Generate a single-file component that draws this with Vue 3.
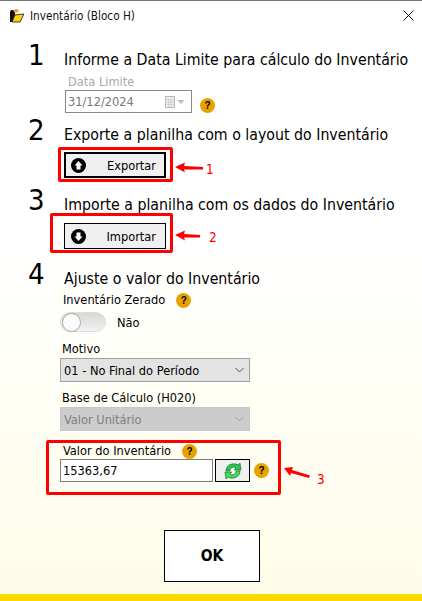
<template>
  <div class="window">
    <header class="titlebar">
      <svg class="folder" width="15" height="14" viewBox="0 0 15 14">
        <path d="M1 3 L1 13 L3 13 L6 6 L6 3 L4 1 L2 1 Z" fill="#111" />
        <path d="M4 1 L7 0 L10 1 L9 3 L6 4 Z" fill="#e8a33a" />
        <path d="M3 13 L6 6 L15 5 L11 13 Z" fill="#ffd800" stroke="#111" stroke-width="0.8" />
      </svg>
      <span class="title">Inventário (Bloco H)</span>
      <svg class="close" width="11" height="11" viewBox="0 0 11 11">
        <path d="M0.5 0.5 L10.5 10.5 M10.5 0.5 L0.5 10.5" stroke="#111" stroke-width="1" fill="none" />
      </svg>
    </header>

    <main class="content">
      <section class="step">
        <div class="step-head"><span class="num">1</span><h2>Informe a Data Limite para cálculo do Inventário</h2></div>
        <div class="label muted">Data Limite</div>
        <div class="date-row">
          <div class="date-box">
            <span>31/12/2024</span>
            <svg width="20" height="12" viewBox="0 0 20 12">
              <rect x="0.5" y="0.5" width="9" height="11" fill="#eee" stroke="#bbb" />
              <path d="M1 3.5H9M1 6H9M1 8.5H9M3.5 3V11M6 3V11" stroke="#c8c8c8" stroke-width="0.7" />
              <path d="M12.5 4 L19.5 4 L16 8 Z" fill="#bdbdbd" />
            </svg>
          </div>
          <span class="help date-help">?</span>
        </div>
      </section>

      <section class="step step-2">
        <div class="step-head"><span class="num">2</span><h2>Exporte a planilha com o layout do Inventário</h2></div>
        <div class="action-row row-export">
          <div class="mark mark-export">
            <button class="action action-focus">
              <svg class="round" width="15" height="15" viewBox="0 0 15 15">
                <circle cx="7.5" cy="7.5" r="7.5" fill="#000" />
                <path d="M7.5 3 L11.5 7.5 L9.5 7.5 L9.5 11.5 L5.5 11.5 L5.5 7.5 L3.5 7.5 Z" fill="#fff" />
              </svg>
              <span>Exportar</span>
            </button>
          </div>
          <svg class="arrow" width="30" height="12" viewBox="0 0 30 12">
            <path d="M1 5 L11 0.5 L10 4 L29 5 L29 7.5 L10 7.5 L11 10.5 Z" fill="#f00" />
          </svg>
          <span class="note note-1">1</span>
        </div>
      </section>

      <section class="step step-3">
        <div class="step-head"><span class="num">3</span><h2>Importe a planilha com os dados do Inventário</h2></div>
        <div class="action-row row-import">
          <div class="mark mark-import">
            <button class="action">
              <svg class="round" width="15" height="15" viewBox="0 0 15 15">
                <circle cx="7.5" cy="7.5" r="7.5" fill="#000" />
                <path d="M7.5 12 L11.5 7.5 L9.5 7.5 L9.5 3.5 L5.5 3.5 L5.5 7.5 L3.5 7.5 Z" fill="#fff" />
              </svg>
              <span>Importar</span>
            </button>
          </div>
          <svg class="arrow" width="27" height="12" viewBox="0 0 27 12">
            <path d="M1 5 L11 0.5 L10 4 L26 5 L26 7.5 L10 7.5 L11 10.5 Z" fill="#f00" />
          </svg>
          <span class="note note-2">2</span>
        </div>
      </section>

      <section class="step step-4">
        <div class="step-head"><span class="num">4</span><h2>Ajuste o valor do Inventário</h2></div>
        <div class="field">
          <div class="label zero-label">Inventário Zerado <span class="help">?</span></div>
          <div class="toggle-row">
            <div class="toggle"><span class="knob"></span></div>
            <span class="toggle-text">Não</span>
          </div>
          <div class="label field-label">Motivo</div>
          <div class="select">
            <span>01 - No Final do Período</span>
            <svg width="9" height="6" viewBox="0 0 9 6"><path d="M0.5 1 L4.5 5 L8.5 1" fill="none" stroke="#555" stroke-width="1" /></svg>
          </div>
          <div class="label field-label">Base de Cálculo (H020)</div>
          <div class="select select-off">
            <span>Valor Unitário</span>
            <svg width="9" height="6" viewBox="0 0 9 6"><path d="M0.5 1 L4.5 5 L8.5 1" fill="none" stroke="#a0a0a0" stroke-width="1" /></svg>
          </div>
        </div>

        <div class="value-row">
          <div class="mark mark-value">
            <div class="label value-label">Valor do Inventário <span class="help">?</span></div>
            <div class="value-inputs">
              <input class="value-input" value="15363,67" />
              <button class="refresh">
                <svg width="18" height="18" viewBox="0 0 18 18">
                  <circle cx="9" cy="9" r="5" fill="#fff" />
                  <path d="M2 9 C2 3 9 0 14 3 L16 1 L17 8 L10 8 L12 6 C9 4 6 6 6 9 Z" fill="#2ec44c" stroke="#0b7a22" stroke-width="0.7" />
                  <path d="M16 9 C16 15 9 18 4 15 L2 17 L1 10 L8 10 L6 12 C9 14 12 12 12 9 Z" fill="#46d863" stroke="#0b7a22" stroke-width="0.7" />
                </svg>
              </button>
              <span class="help">?</span>
            </div>
          </div>
          <svg class="arrow-3" width="26" height="12" viewBox="0 0 26 12">
            <path d="M0 1 L9 0 L8 3 L26 8.5 L25 11 L7 6 L6 9 Z" fill="#f00" />
          </svg>
          <span class="note note-3">3</span>
        </div>
      </section>

      <div class="footer"><button class="ok">OK</button></div>
    </main>
    <div class="bar"></div>
  </div>
</template>

<script setup>
</script>

<style>
html, body {
  margin: 0;
  background: #fff;
}
</style>

<style scoped>
.window {
  width: 422px;
  height: 601px;
  box-sizing: border-box;
  border-top: 1px solid #777;
  display: flex;
  flex-direction: column;
  overflow: hidden;
  font-family: "DejaVu Sans Condensed", "DejaVu Sans", "Noto Sans", sans-serif;
  font-stretch: condensed;
  font-size: 12.7px;
  color: #000;
  background: linear-gradient(#fff 0%, #fff 40%, #fffde8 100%);
}
.titlebar {
  height: 29px;
  flex: none;
  display: flex;
  align-items: center;
  padding: 0 8px 0 9px;
}
.folder { margin-right: 6px; }
.title { font-size: 11.7px; color: #111; }
.close { margin-left: auto; }
.content {
  flex: 1;
  padding-left: 28px;
  padding-top: 12px;
}
.step-head {
  display: flex;
  align-items: baseline;
  height: 30px;
}
.num {
  width: 36px;
  font-size: 29px;
  line-height: 26px;
}
h2 {
  margin: 0;
  font-size: 15.75px;
  font-weight: 400;
  white-space: nowrap;
}
.label {
  font-size: 12.7px;
  line-height: 16px;
}
.muted {
  color: #aaa;
  margin: 2px 0 0 40px;
}
.date-row {
  display: flex;
  align-items: flex-end;
  margin-left: 37px;
}
.date-box {
  width: 127px;
  height: 23px;
  box-sizing: border-box;
  border: 1px solid #888;
  display: flex;
  align-items: center;
  justify-content: space-between;
  padding: 0 6px 0 2px;
  color: #777;
}
.date-help { margin-left: 8px; }
.help {
  display: inline-block;
  width: 15px;
  height: 15px;
  line-height: 15px;
  border-radius: 50%;
  background: #e8a200;
  color: #000;
  text-align: center;
  font-weight: 700;
  font-size: 10px;
  font-family: "Liberation Sans", sans-serif;
  flex: none;
}
.step-2 { margin-top: 4px; }
.step-3 { margin-top: 5px; }
.step-4 { margin-top: 8px; }
.action-row {
  display: flex;
  align-items: center;
}
.row-export { margin-top: 0; }
.row-import { margin-top: -4px; }
.mark {
  border: 3px solid #f00;
  box-sizing: border-box;
  border-radius: 2px;
}
.mark-export {
  margin-left: 30px;
  width: 115px;
  height: 35px;
  padding: 2px 3px;
}
.mark-import {
  margin-left: 22px;
  width: 123px;
  height: 40px;
  padding: 7px 4px 1px 11px;
}
.action {
  width: 102px;
  height: 26px;
  box-sizing: border-box;
  border: 1px solid #000;
  background: #f0f0f0;
  display: flex;
  align-items: center;
  justify-content: space-between;
  padding: 0 9px 0 6px;
  font: inherit;
  color: #000;
}
.action-focus { border-width: 2px; padding: 0 8px 0 5px; }
.arrow { margin-left: 1px; margin-top: 6px; }
.note {
  color: #f00;
  font-size: 13.5px;
}
.note-1 { margin-left: 2px; margin-top: 8px; }
.note-2 { margin-left: 8px; margin-top: 8px; }
.field { margin-left: 32px; }
.zero-label {
  margin-left: 3px;
  display: flex;
  align-items: center;
  gap: 11px;
  height: 18px;
}
.toggle-row {
  display: flex;
  align-items: center;
  height: 22px;
  margin-top: 2px;
}
.toggle {
  width: 46px;
  height: 20px;
  box-sizing: border-box;
  border-radius: 10px;
  background: linear-gradient(#d8d8d8, #f2f2f2);
  border: 1px solid #ddd;
  position: relative;
}
.knob {
  position: absolute;
  left: 1px;
  top: 0;
  width: 17px;
  height: 17px;
  border-radius: 50%;
  background: #fbfbfb;
  border: 1px solid #aaa;
}
.toggle-text { margin-left: 11px; }
.field-label {
  margin-left: 2px;
  margin-top: 6px;
  height: 19px;
  line-height: 19px;
}
.select {
  width: 190px;
  height: 24px;
  box-sizing: border-box;
  border: 1px solid #a0a0a0;
  background: #e3e3e3;
  display: flex;
  align-items: center;
  justify-content: space-between;
  padding: 0 5px 0 3px;
}
.select-off {
  background: #ccc;
  border-color: #c6c6c6;
  color: #808080;
}
.value-row {
  display: flex;
  align-items: flex-start;
  margin-top: 9px;
  margin-left: 18px;
}
.mark-value {
  width: 235px;
  height: 55px;
  padding: 0 0 0 11px;
}
.value-label {
  margin-left: 3px;
  height: 16px;
  display: flex;
  align-items: center;
  gap: 11px;
}
.value-inputs {
  display: flex;
  align-items: center;
}
.value-input {
  width: 153px;
  height: 23px;
  box-sizing: border-box;
  border: 1px solid #808080;
  padding: 0 2px;
  font: inherit;
  color: #000;
  background: #fff;
  outline: none;
}
.refresh {
  width: 35px;
  height: 23px;
  box-sizing: border-box;
  margin-left: 2px;
  margin-right: 4px;
  border: 1px solid #000;
  background: #f0f0f0;
  padding: 0;
  display: flex;
  align-items: center;
  justify-content: center;
}
.arrow-3 { margin-left: 3px; margin-top: 27px; }
.note-3 { margin-left: 7px; margin-top: 31px; }
.footer {
  display: flex;
  margin-top: 35px;
  margin-left: 136px;
}
.ok {
  width: 96px;
  height: 52px;
  box-sizing: border-box;
  border: 1px solid #000;
  background: #fff;
  font-family: inherit;
  font-stretch: condensed;
  font-size: 15.5px;
  font-weight: 700;
  color: #000;
}
.bar {
  height: 7px;
  flex: none;
  background: #ffd800;
}
</style>
